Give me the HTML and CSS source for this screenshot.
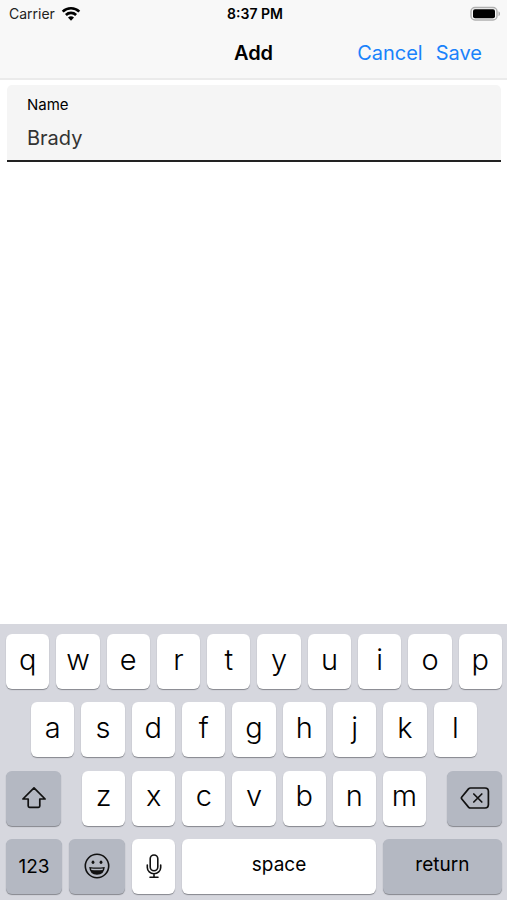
FILE: index.html
```html
<!DOCTYPE html>
<html lang="en">
<head>
<meta charset="utf-8">
<meta name="viewport" content="width=device-width, initial-scale=1">
<title>Add</title>
<link rel="stylesheet" href="styles.css">
</head>
<body>
<header class="top">
  <div class="status">
    <div class="carrier">
      <span>Carrier</span>
      <svg width="20" height="16" viewBox="0 0 20 16" aria-hidden="true">
        <g fill="none" stroke="#000" stroke-width="2.7">
          <path d="M1.7 5.6a12 12 0 0 1 16.6 0"/>
          <path d="M4.9 9a7.4 7.4 0 0 1 10.2 0"/>
        </g>
        <path d="M7 11.6a4.4 4.4 0 0 1 6 0L10 14.7z"/>
      </svg>
    </div>
    <time class="clock">8:37 PM</time>
    <svg class="battery" width="32" height="16" viewBox="0 0 32 16" aria-hidden="true">
      <rect x="2" y="1.500" width="26" height="12.500" rx="4" fill="#f8f8f8" stroke="#b0b0b0" stroke-width="1.500"/>
      <rect x="4" y="3.300" width="22" height="9" rx="2"/>
      <path d="M29.500 5.300c2 .9 2 4.100 0 5z" fill="#aaa"/>
    </svg>
  </div>
  <nav class="bar">
    <h1>Add</h1>
    <div class="actions">
      <button type="button">Cancel</button>
      <button type="button">Save</button>
    </div>
  </nav>
</header>
<main>
  <div class="field">
    <label for="name">Name</label>
    <input id="name" type="text" value="Brady" autocomplete="off">
  </div>
</main>
<section class="keyboard" aria-label="Keyboard">
  <div class="row">
    <button>q</button><button>w</button><button>e</button><button>r</button><button>t</button><button>y</button><button>u</button><button>i</button><button>o</button><button>p</button>
  </div>
  <div class="row inset">
    <button>a</button><button>s</button><button>d</button><button>f</button><button>g</button><button>h</button><button>j</button><button>k</button><button>l</button>
  </div>
  <div class="row-shift">
    <button class="dark icon" aria-label="Shift">
      <svg width="26" height="24" viewBox="0 0 26 24"><path d="M13 1.8 1.900 13h5.300v7.100q0 1.300 1.300 1.300h9q1.300 0 1.300-1.300V13h5.300z" fill="none" stroke="#111" stroke-width="1.700" stroke-linejoin="round"/></svg>
    </button>
    <div class="row">
      <button>z</button><button>x</button><button>c</button><button>v</button><button>b</button><button>n</button><button>m</button>
    </div>
    <button class="dark icon" aria-label="Delete">
      <svg width="30" height="24" viewBox="0 0 30 24" fill="none" stroke="#111" stroke-width="1.700" stroke-linejoin="round" stroke-linecap="round"><path d="M10.500 2H25q3.400 0 3.400 3.400v13.200Q28.400 22 25 22H10.500q-1.200 0-2-.9L1.800 13q-.8-1 0-2l6.700-8.100q.8-.9 2-.9z"/><path d="m13.800 8 8 8m0-8-8 8"/></svg>
    </button>
  </div>
  <div class="row-space">
    <button class="dark digits">123</button>
    <button class="dark icon" aria-label="Emoji">
      <svg width="26" height="26" viewBox="0 0 26 26"><circle cx="13" cy="13" r="11.700" fill="none" stroke="#111" stroke-width="1.600"/><ellipse cx="9" cy="9.200" rx="1.400" ry="1.800" fill="#111"/><ellipse cx="17" cy="9.200" rx="1.400" ry="1.800" fill="#111"/><path d="M5.200 14q7.800 1.200 15.600 0-.6 7.800-7.800 7.800T5.200 14z" fill="#111"/><path d="M7 15.400q6 .9 12 0l-.4 1.500q-5.600.9-11.200 0z" fill="#b4b8c2"/></svg>
    </button>
    <button class="icon" aria-label="Dictate">
      <svg width="16" height="26" viewBox="0 0 16 26" fill="none" stroke="#111" stroke-width="1.600" stroke-linecap="round"><rect x="4.200" y="2" width="7.600" height="15.800" rx="3.800"/><path d="M1.300 12v2.500a6.700 6.200 0 0 0 13.400 0V12M8 20.700V24M4 24.200h8"/></svg>
    </button>
    <button class="word">space</button>
    <button class="dark word">return</button>
  </div>
</section>
</body>
</html>
```
FILE: styles.css
```css
* {
  box-sizing: border-box;
}

body {
  margin: 0;
  min-height: 100vh;
  display: flex;
  flex-direction: column;
  background: #fff;
  color: #000;
  font-family: Inter, "Liberation Sans", sans-serif;
}

button,
input {
  margin: 0;
  padding: 0;
  border: 0;
  font-family: inherit;
  color: inherit;
}

svg {
  display: block;
}

.top {
  background: #f8f8f8;
  border-bottom: 2px solid #ebebeb;
}

.status,
.bar {
  display: grid;
  grid-template-columns: 1fr auto 1fr;
  align-items: center;
}

.status {
  height: 27px;
  padding: 0 6px 0 9px;
  font-size: 14px;
}

.carrier {
  display: flex;
  align-items: center;
  gap: 6px;
  color: #222;
}

.clock {
  font-weight: 600;
}

.battery {
  justify-self: end;
}

.bar {
  height: 51px;
  padding: 0 25px;
}

.bar h1 {
  grid-column: 2;
  margin: 0;
  font-size: 20px;
  font-weight: 600;
}

.actions {
  display: flex;
  justify-content: flex-end;
  gap: 13px;
}

.actions button {
  background: none;
  color: #1a82fb;
  font-size: 20px;
}

main {
  flex: 1;
  padding: 5px 6px 0 7px;
}

.field {
  display: flex;
  flex-direction: column;
  gap: 6px;
  padding: 10px 20px 6px;
  background: #f5f5f5;
  border-bottom: 2px solid #222;
  border-radius: 5px 5px 0 0;
}

.field label {
  font-size: 15px;
  line-height: 20px;
}

.field input {
  width: 100%;
  height: 38px;
  background: none;
  color: #333;
  font-size: 20px;
  outline: 0;
}

.field input {
  height: 33px;
}

.keyboard {
  display: flex;
  flex-direction: column;
  justify-content: space-between;
  min-height: 276px;
  padding: 10px 5px 6px 6px;
  background: #d6d7de;
}

.row {
  display: flex;
  gap: 7px;
}

.inset {
  padding: 0 25px;
}

.row-shift {
  display: grid;
  grid-template-columns: 55fr 344fr 55fr;
  gap: 21px;
}

.row-space {
  display: grid;
  grid-template-columns: 56fr 56fr 43fr 193fr 119fr;
  gap: 7px;
}

.keyboard button {
  flex: 1;
  min-width: 0;
  height: 55px;
  padding-bottom: 5px;
  border-radius: 6px;
  background: #fff;
  box-shadow: 0 1px 1px #85878d;
  font-size: 29px;
  font-weight: 350;
}

.keyboard .dark {
  background: #b4b8c2;
}

.keyboard .icon {
  display: flex;
  align-items: center;
  justify-content: center;
  padding: 0;
}

.keyboard .digits,
.keyboard .word {
  font-size: 19px;
  font-weight: 400;
}

.keyboard .word {
  padding-bottom: 3px;
}

.keyboard .digits {
  padding: 0;
}
```
